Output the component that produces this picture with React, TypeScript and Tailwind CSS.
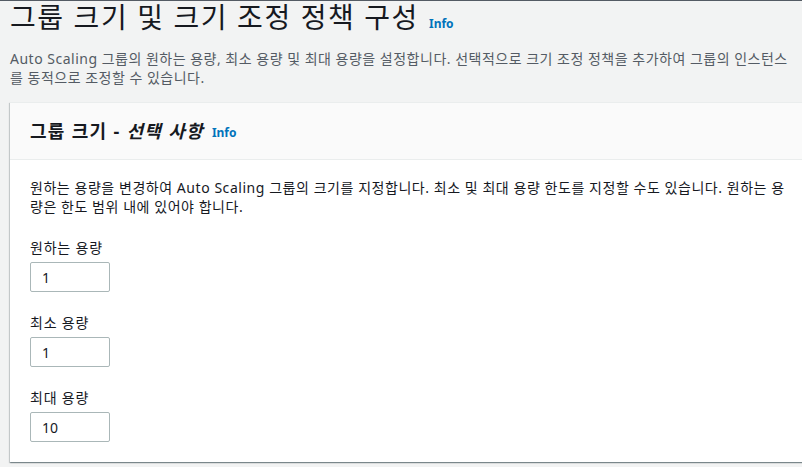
const FIELDS = [
  { label: "원하는 용량", value: "1" },
  { label: "최소 용량", value: "1" },
  { label: "최대 용량", value: "10" },
];

function InfoLink({ className = "" }: { className?: string }) {
  return (
    <a className={`text-[12px] font-bold text-[#0073bb] ${className}`} href="#">
      Info
    </a>
  );
}

export default function App() {
  return (
    <div
      className="h-[467px] w-[802px] overflow-hidden border-t border-[#545b64] bg-[#f2f3f3] text-[#16191f]"
      style={{ fontFamily: '"Noto Sans", "Noto Sans CJK KR", sans-serif' }}
    >
      <div className="pl-[10px]">
        <div className="flex items-baseline gap-[10px]">
          <h1 className="whitespace-nowrap text-[28px] font-normal leading-[32px] tracking-[1.6px] text-[#16191f]">
            그룹 크기 및 크기 조정 정책 구성
          </h1>
          <InfoLink />
        </div>
        <p className="mt-[16px] whitespace-nowrap text-[14px] leading-[19px] tracking-[0.5px] text-[#545b64]">
          Auto Scaling 그룹의 원하는 용량, 최소 용량 및 최대 용량을 설정합니다. 선택적으로 크기 조정 정책을 추가하여 그룹의 인스턴스
          <br />를 동적으로 조정할 수 있습니다.
        </p>

        <section className="mt-[15px] w-[820px] border-t border-[#eaeded] bg-white shadow-[0_1px_1px_0_rgba(0,28,36,0.3),1px_1px_1px_0_rgba(0,28,36,0.15),-1px_1px_1px_0_rgba(0,28,36,0.15)]">
          <header className="flex h-[57px] items-center gap-[8px] border-b border-[#eaeded] bg-[#fafafa] px-[20px]">
            <h2 className="whitespace-nowrap text-[18px] font-bold leading-[22px] tracking-[1.3px]">
              그룹 크기 - <i>선택 사항</i>
            </h2>
            <InfoLink className="mt-[4px]" />
          </header>

          <div className="px-[20px] pb-[20px] pt-[18px]">
            <p className="whitespace-nowrap text-[14px] leading-[19px] tracking-[0.55px]">
              원하는 용량을 변경하여 Auto Scaling 그룹의 크기를 지정합니다. 최소 및 최대 용량 한도를 지정할 수도 있습니다. 원하는 용
              <br />
              량은 한도 범위 내에 있어야 합니다.
            </p>

            <div className="mt-[22px] flex flex-col gap-[21px]">
              {FIELDS.map((field) => (
                <label className="flex flex-col gap-[5px]" key={field.label}>
                  <span className="text-[14px] leading-[19px] tracking-[0.8px]">{field.label}</span>
                  <input
                    className="h-[30px] w-[80px] rounded-[2px] border border-[#aab7b8] bg-white px-[11px] text-[14px] text-[#16191f] outline-none"
                    defaultValue={field.value}
                    type="text"
                  />
                </label>
              ))}
            </div>
          </div>
        </section>
      </div>
    </div>
  );
}
